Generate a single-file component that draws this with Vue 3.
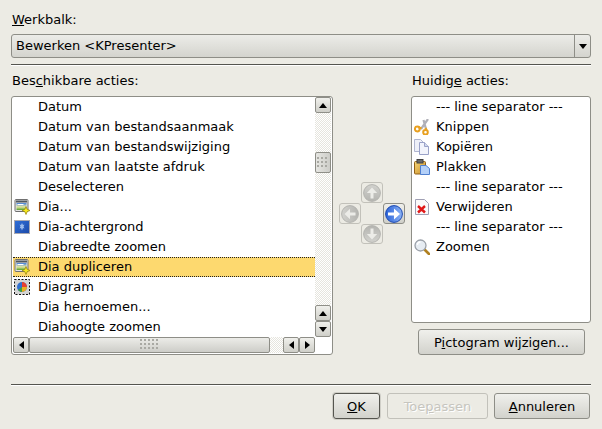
<template>
  <div class="dialog">
    <svg class="defs" width="0" height="0">
      <defs>
        <linearGradient id="gBlue" x1="0" y1="0" x2="0" y2="1">
          <stop offset="0" stop-color="#8db4f5" />
          <stop offset="1" stop-color="#2a62d8" />
        </linearGradient>
        <linearGradient id="gGray" x1="0" y1="0" x2="0" y2="1">
          <stop offset="0" stop-color="#d2d2ce" />
          <stop offset="1" stop-color="#b4b4b0" />
        </linearGradient>
        <linearGradient id="gSlide" x1="0" y1="0" x2="0" y2="1">
          <stop offset="0" stop-color="#3f7fe0" />
          <stop offset="0.55" stop-color="#e8e8a0" />
          <stop offset="1" stop-color="#50a030" />
        </linearGradient>
        <linearGradient id="gBg" x1="0" y1="0" x2="1" y2="1">
          <stop offset="0" stop-color="#2f6fd8" />
          <stop offset="1" stop-color="#1c4aa8" />
        </linearGradient>
        <linearGradient id="gClip" x1="0" y1="0" x2="1" y2="1">
          <stop offset="0" stop-color="#f8d878" />
          <stop offset="1" stop-color="#c88c28" />
        </linearGradient>
      </defs>
      <symbol id="dia" viewBox="0 0 16 16">
        <rect x="1" y="0.5" width="13" height="12" rx="1" fill="#e4e4e4" stroke="#707070" />
        <rect x="2" y="1.5" width="11" height="2" fill="#505860" />
        <rect x="2.5" y="4" width="10" height="7" fill="url(#gSlide)" />
        <rect x="3.5" y="5" width="6" height="1" fill="#fff" />
        <path d="M12 7.5l1.2 2.8 2.800 1.200-2.800 1.200L12 15.500l-1.200-2.800L8 11.500l2.800-1.200z" fill="#f6e81c" stroke="#8f8010" stroke-width=".7" />
      </symbol>
      <symbol id="diabg" viewBox="0 0 16 16">
        <rect x="0.5" y="1.5" width="15" height="13" fill="url(#gBg)" stroke="#a8a8b0" />
        <path d="M8 4l1 2 1.500-.5-1 2 1 2-1.500-.5-1 2.500-1-2.500-1.500.5 1-2-1-2 1.500.5z" fill="#9cbcec" />
      </symbol>
      <symbol id="diagram" viewBox="0 0 16 16">
        <rect x="0.5" y="0.5" width="15" height="15" fill="#d4d4d4" stroke="#111" stroke-dasharray="2 1.500" />
        <circle cx="8" cy="8" r="5" fill="#3070d0" />
        <path d="M8 8V3a5 5 0 0 1 5 5z" fill="#e84030" />
        <path d="M8 8h5a5 5 0 0 1-5 5z" fill="#e8b020" />
        <path d="M8 8v5a5 5 0 0 1-4-2z" fill="#40a040" />
      </symbol>
      <symbol id="cut" viewBox="0 0 16 16">
        <path d="M14 0L7 10M9.500 1l2.500 9" stroke="#b0b0b8" stroke-width="2.200" fill="none" />
        <path d="M7.500 9.500L4 8M11.500 9l1 2" stroke="#e8a020" stroke-width="2.200" fill="none" />
        <circle cx="3.300" cy="10" r="2.400" fill="none" stroke="#e8a020" stroke-width="2" />
        <circle cx="11.500" cy="13.300" r="2.300" fill="none" stroke="#e8a020" stroke-width="2" />
      </symbol>
      <symbol id="copy" viewBox="0 0 16 16">
        <path d="M0.500.5h6l3 3v9h-9z" fill="#eef0f8" stroke="#b0b6d0" />
        <path d="M5.500 3.500h5l4 4v8h-9z" fill="#f2f4fc" stroke="#9aa2c8" />
        <path d="M10.500 3.500v4h4" fill="#d0d8ec" stroke="#9aa2c8" />
      </symbol>
      <symbol id="paste" viewBox="0 0 16 16">
        <rect x="0.5" y="2.5" width="11" height="12.500" rx="1" fill="url(#gClip)" stroke="#906018" />
        <rect x="3" y="0.5" width="6" height="3.500" fill="#686868" stroke="#404040" />
        <path d="M6.500 6.500h5.500l3.500 3v6h-9z" fill="#b4d0f8" stroke="#5080d0" />
      </symbol>
      <symbol id="del" viewBox="0 0 16 16">
        <path d="M1.500.5h9l4 4v11h-13z" fill="#fafafa" stroke="#a0a0b4" />
        <path d="M4 7l7 6.500M11 7l-7 6.500" stroke="#e01818" stroke-width="2.400" />
      </symbol>
      <symbol id="zoom" viewBox="0 0 16 16">
        <path d="M10 10l5 5" stroke="#b08020" stroke-width="2.600" stroke-linecap="round" />
        <circle cx="6.500" cy="6.500" r="5.500" fill="#e6ecf2" stroke="#9aa0a8" stroke-width="1.300" />
        <path d="M3.500 6a3 3 0 0 1 3-3" stroke="#fff" stroke-width="1.300" fill="none" />
      </symbol>
      <symbol id="arrowOff" viewBox="0 0 18 18">
        <circle cx="9" cy="9" r="8.400" fill="url(#gGray)" stroke="#b4b4b0" />
        <path d="M9 3.500L3.800 9H7.500V14.500H10.500V9H14.200z" fill="#ecece8" />
      </symbol>
      <symbol id="arrowOn" viewBox="0 0 18 18">
        <circle cx="9" cy="9" r="8.400" fill="url(#gBlue)" stroke="#1c48b0" />
        <path d="M9 3L3.500 9H7.500V15H10.500V9H14.500z" fill="#fff" />
      </symbol>
    </svg>

    <label class="top-label"><u>W</u>erkbalk:</label>
    <div class="combo">
      <span class="combo-text">Bewerken &lt;KPresenter&gt;</span>
      <span class="combo-btn"><i class="tri down"></i></span>
    </div>
    <div class="sep first"></div>

    <div class="columns">
      <div class="col-left">
        <label class="list-label">Bes<u>c</u>hikbare acties:</label>
        <div class="listbox left-box">
          <div class="rows">
            <div
              v-for="item in available"
              :key="item.text"
              class="row"
              :class="{ selected: item.selected }"
            >
              <svg v-if="item.icon" class="icon"><use :href="'#' + item.icon" /></svg>
              <span class="row-text">{{ item.text }}</span>
            </div>
          </div>
          <div class="vbar">
            <span class="sb-btn"><i class="tri up"></i></span>
            <span class="track"><span class="vthumb"><i class="grip"></i></span></span>
            <span class="sb-btn"><i class="tri up"></i></span>
            <span class="sb-btn"><i class="tri down"></i></span>
          </div>
          <div class="hbar">
            <span class="sb-btn"><i class="tri left"></i></span>
            <span class="hthumb"><i class="grip"></i></span>
            <span class="track"></span>
            <span class="sb-btn"><i class="tri left"></i></span>
            <span class="sb-btn"><i class="tri right"></i></span>
          </div>
          <div class="corner"></div>
        </div>
      </div>

      <div class="mover">
        <span v-for="m in movers" :key="m.dir" class="move-btn" :class="[m.dir, { on: m.on }]">
          <svg class="move-icon"><use :href="m.on ? '#arrowOn' : '#arrowOff'" /></svg>
        </span>
      </div>

      <div class="col-right">
        <label class="list-label">Huidig<u>e</u> acties:</label>
        <div class="listbox right-box">
          <div v-for="(item, i) in current" :key="i" class="row">
            <svg v-if="item.icon" class="icon"><use :href="'#' + item.icon" /></svg>
            <span class="row-text">{{ item.text }}</span>
          </div>
        </div>
        <button type="button" class="btn icon-btn">P<u>i</u>ctogram wijzigen...</button>
      </div>
    </div>

    <div class="sep last"></div>
    <div class="actions">
      <button type="button" class="btn ok"><u>O</u>K</button>
      <button type="button" class="btn apply" disabled>Toe<u>p</u>assen</button>
      <button type="button" class="btn cancel"><u>A</u>nnuleren</button>
    </div>
  </div>
</template>

<script setup>
const available = [
  { text: "Datum" },
  { text: "Datum van bestandsaanmaak" },
  { text: "Datum van bestandswijziging" },
  { text: "Datum van laatste afdruk" },
  { text: "Deselecteren" },
  { text: "Dia...", icon: "dia" },
  { text: "Dia-achtergrond", icon: "diabg" },
  { text: "Diabreedte zoomen" },
  { text: "Dia dupliceren", icon: "dia", selected: true },
  { text: "Diagram", icon: "diagram" },
  { text: "Dia hernoemen..." },
  { text: "Diahoogte zoomen" },
];

const current = [
  { text: "--- line separator ---" },
  { text: "Knippen", icon: "cut" },
  { text: "Kopiëren", icon: "copy" },
  { text: "Plakken", icon: "paste" },
  { text: "--- line separator ---" },
  { text: "Verwijderen", icon: "del" },
  { text: "--- line separator ---" },
  { text: "Zoomen", icon: "zoom" },
];

const movers = [
  { dir: "up" },
  { dir: "left" },
  { dir: "right", on: true },
  { dir: "down" },
];
</script>

<style>
html,
body {
  margin: 0;
  background: #ecebe4;
}
</style>

<style scoped>
.dialog {
  width: 602px;
  height: 429px;
  box-sizing: border-box;
  padding: 0 11px;
  background: #ecebe4;
  font-family: "DejaVu Sans", sans-serif;
  font-size: 13px;
  color: #000;
  display: flex;
  flex-direction: column;
  overflow: hidden;
}
.defs {
  display: block;
  flex: none;
}
.top-label {
  height: 34px;
  padding-left: 1px;
  box-sizing: border-box;
  line-height: 40px;
}
.combo {
  height: 24px;
  flex: none;
  box-sizing: border-box;
  border: 1px solid #8e8e87;
  border-radius: 3px;
  background: linear-gradient(#ececE8, #d4d4ce);
  display: flex;
}
.combo-text {
  flex: 1;
  padding-left: 4px;
  line-height: 22px;
}
.combo-btn {
  width: 15px;
  border-left: 1px solid #8e8e87;
  display: flex;
  align-items: center;
  justify-content: center;
}
.sep {
  flex: none;
  height: 1px;
  background: #55554f;
  border-bottom: 1px solid #fff;
}
.sep.first {
  margin-top: 6px;
}
.sep.last {
  margin-top: 29px;
}
.columns {
  display: flex;
  height: 289px;
  flex: none;
}
.col-left {
  width: 322px;
  display: flex;
  flex-direction: column;
}
.col-right {
  width: 180px;
  display: flex;
  flex-direction: column;
}
.list-label {
  height: 30px;
  flex: none;
  padding-left: 1px;
  line-height: 30px;
}
.listbox {
  box-sizing: border-box;
  border: 1px solid #8e8e87;
  border-radius: 3px;
  background: #fff;
}
.left-box {
  height: 259px;
  padding: 0 1px 2px 1px;
  display: grid;
  grid-template-columns: 302px 16px;
  grid-template-rows: 240px 16px;
}
.rows {
  overflow: hidden;
}
.row {
  height: 20px;
  box-sizing: border-box;
  display: flex;
  align-items: center;
  padding-left: 25px;
  white-space: nowrap;
}
.row-text {
  margin-top: -2px;
}
.row .icon {
  width: 16px;
  height: 16px;
  margin-left: -24px;
  margin-right: 8px;
  flex: none;
}
.row.selected {
  background: #fdd96f;
  border-top: 1px dotted #222;
  border-bottom: 1px dotted #222;
}
.vbar {
  display: flex;
  flex-direction: column;
}
.hbar {
  display: flex;
}
.corner {
  background: #fff;
}
.sb-btn {
  flex: none;
  width: 16px;
  height: 16px;
  box-sizing: border-box;
  border: 1px solid #8e8e87;
  border-radius: 2px;
  background: linear-gradient(#f0f0ec, #cfcfc9);
  display: flex;
  align-items: center;
  justify-content: center;
}
.track {
  flex: 1;
  background: conic-gradient(#e6e5de 25%, #fff 0 50%, #e6e5de 0 75%, #fff 0) 0 0 / 2px 2px;
}
.vbar .track {
  padding-top: 39px;
}
.vthumb {
  display: flex;
  height: 21px;
  box-sizing: border-box;
  border: 1px solid #8e8e87;
  border-radius: 2px;
  background: linear-gradient(90deg, #e6e6e2, #cdcdc8);
  align-items: center;
  justify-content: center;
}
.hthumb {
  flex: none;
  width: 241px;
  box-sizing: border-box;
  border: 1px solid #8e8e87;
  border-radius: 2px;
  background: linear-gradient(#ececE8, #cdcdc8);
  display: flex;
  align-items: center;
  justify-content: center;
}
.grip {
  display: block;
  width: 12px;
  height: 12px;
  background: radial-gradient(circle at 1px 1px, #a9a9a3 1px, transparent 1.2px) 0 0 / 4px 4px;
}
.hthumb .grip {
  width: 20px;
}
.tri {
  display: block;
  width: 0;
  height: 0;
  border-style: solid;
  border-color: transparent;
}
.tri.up {
  border-width: 0 4.5px 5px;
  border-bottom-color: #000;
}
.tri.down {
  border-width: 5px 4.5px 0;
  border-top-color: #000;
}
.tri.left {
  border-width: 4.5px 5px 4.5px 0;
  border-right-color: #000;
}
.tri.right {
  border-width: 4.5px 0 4.5px 5px;
  border-left-color: #000;
}
.mover {
  width: 78px;
  height: 62px;
  margin-top: 116px;
  box-sizing: border-box;
  padding: 0 6px;
  display: grid;
  grid-template-columns: 22px 22px 22px;
  grid-template-rows: 21px 21px 20px;
  justify-content: center;
}
.move-btn {
  box-sizing: border-box;
  border: 1px solid #c2c1ba;
  border-radius: 3px;
  display: flex;
  align-items: center;
  justify-content: center;
}
.move-btn.up {
  grid-area: 1 / 2;
}
.move-btn.left {
  grid-area: 2 / 1;
}
.move-btn.right {
  grid-area: 2 / 3;
}
.move-btn.down {
  grid-area: 3 / 2;
}
.move-btn.on {
  border-color: #8e8e87;
  background: linear-gradient(#f0f0ec, #cfcfc9);
}
.move-icon {
  width: 18px;
  height: 18px;
}
.left .move-icon {
  transform: rotate(-90deg);
}
.right .move-icon {
  transform: rotate(90deg);
}
.down .move-icon {
  transform: rotate(180deg);
}
.right-box {
  height: 227px;
  flex: none;
  padding: 0 1px;
}
.right-box .row {
  padding-left: 23px;
}
.right-box .icon {
  margin-left: -22px;
  margin-right: 6px;
}
.btn {
  font: inherit;
  color: #000;
  height: 26px;
  box-sizing: border-box;
  padding: 0;
  border: 1px solid #8e8e87;
  border-radius: 3px;
  background: linear-gradient(#f0f0ec, #d2d2cc);
}
.icon-btn {
  width: 167px;
  margin: 6px 0 0 7px;
  flex: none;
}
.actions {
  margin-top: 7px;
  display: flex;
  justify-content: flex-end;
  gap: 6px;
  padding-right: 1px;
}
.ok {
  width: 47px;
  border-color: #55554f;
  box-shadow: 0 0 0 1px #d0cfc8;
  margin-right: 1px;
}
.apply {
  width: 101px;
  border-color: #c2c1ba;
  background: #ecebe4;
  color: #c6c5be;
  text-shadow: 1px 1px 0 #fff;
}
.cancel {
  width: 96px;
}
</style>
